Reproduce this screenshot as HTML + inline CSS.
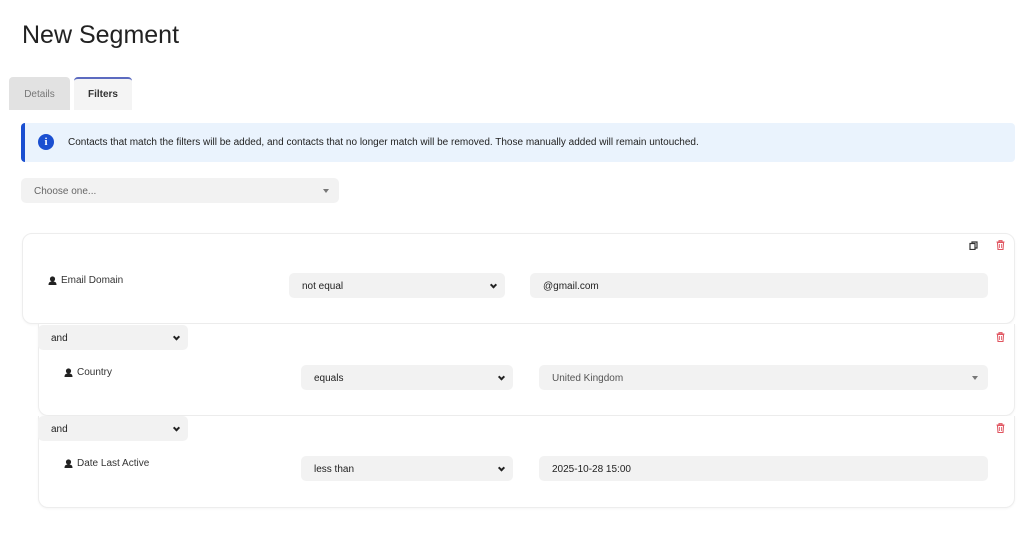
<!DOCTYPE html>
<html><head><style>
*{box-sizing:border-box;margin:0;padding:0}
body{width:1024px;height:536px;background:#fff;font-family:"Liberation Sans",sans-serif;color:#333;position:relative;overflow:hidden;font-size:10px}
.a{position:absolute}
.sel{position:absolute;background:#f2f2f2;border-radius:5px;font-size:10px;color:#222;padding-left:13px;padding-top:1px;display:flex;align-items:center}
.chev{position:absolute;right:9px;top:50%;width:5px;height:5px;border-right:2px solid #222;border-bottom:2px solid #222;transform:translateY(-70%) rotate(45deg)}
.tri{position:absolute;right:10px;top:50%;border-left:3.5px solid transparent;border-right:3.5px solid transparent;border-top:4px solid #777;transform:translateY(-50%)}
.card{position:absolute;border:1px solid #ededed;border-radius:10px;background:#fff;box-shadow:0 1px 2px rgba(0,0,0,0.04)}
.lbl{position:absolute;font-size:10px;color:#333;display:flex;align-items:center;gap:4px}
</style></head><body>
<div class="a" style="left:22px;top:21px;font-size:25px;color:#222">New Segment</div>
<div class="a" style="left:9px;top:77px;width:61px;height:33px;background:#e2e2e2;border-radius:4px 4px 0 0;font-size:10px;color:#777;display:flex;align-items:center;justify-content:center;padding-top:1px">Details</div>
<div class="a" style="left:74px;top:77px;width:58px;height:33px;background:#f4f4f4;border-top:2px solid #5c6bc0;border-radius:4px 4px 0 0;font-size:10px;font-weight:bold;color:#333;display:flex;align-items:center;justify-content:center">Filters</div>
<div class="a" style="left:21px;top:123px;width:994px;height:39px;background:#eaf3fd;border-left:4px solid #1a4fd1;border-radius:4px"></div>
<div class="a" style="left:38px;top:134px;width:16px;height:16px;border-radius:50%;background:#1a4fd1;color:#fff;font-weight:bold;font-size:11px;text-align:center;line-height:16px;font-family:'Liberation Serif',serif">i</div>
<div class="a" style="left:68px;top:137px;font-size:10px;color:#222">Contacts that match the filters will be added, and contacts that no longer match will be removed. Those manually added will remain untouched.</div>
<div class="sel" style="left:21px;top:178px;width:318px;height:25px;color:#666">Choose one...<div class="tri"></div></div>

<div class="card" style="left:22px;top:233px;width:993px;height:91px"></div>
<div class="card" style="left:38px;top:324px;width:977px;height:92px;border-top:none;border-radius:0 0 10px 10px"></div>
<div class="card" style="left:38px;top:416px;width:977px;height:92px;border-top:none;border-radius:0 0 10px 10px"></div>

<svg class="a" style="left:969px;top:241px" width="9" height="9" viewBox="0 0 9 9"><rect x="1" y="2.5" width="5" height="6" fill="none" stroke="#333" stroke-width="1.2"/><path d="M3 2.5V1h5v6H6" fill="none" stroke="#333" stroke-width="1.2"/></svg>
<svg class="a" style="left:996px;top:240px" width="9" height="10" viewBox="0 0 9 10"><path d="M0.5 2h8M3 2V0.7h3V2M1.5 2.5h6l-0.5 7h-5z" fill="none" stroke="#e05560" stroke-width="1.1"/><path d="M3.5 4v4M5.5 4v4" stroke="#e05560" stroke-width="0.8"/></svg>
<svg class="a" style="left:996px;top:332px" width="9" height="10" viewBox="0 0 9 10"><path d="M0.5 2h8M3 2V0.7h3V2M1.5 2.5h6l-0.5 7h-5z" fill="none" stroke="#e05560" stroke-width="1.1"/><path d="M3.5 4v4M5.5 4v4" stroke="#e05560" stroke-width="0.8"/></svg>
<svg class="a" style="left:996px;top:423px" width="9" height="10" viewBox="0 0 9 10"><path d="M0.5 2h8M3 2V0.7h3V2M1.5 2.5h6l-0.5 7h-5z" fill="none" stroke="#e05560" stroke-width="1.1"/><path d="M3.5 4v4M5.5 4v4" stroke="#e05560" stroke-width="0.8"/></svg>

<div class="lbl" style="left:48px;top:275px"><svg width="9" height="9" viewBox="0 0 9 9"><circle cx="4.5" cy="3" r="2.6" fill="#222"/><path d="M0.5 9c0-3 1.5-3.5 4-3.5s4 0.5 4 3.5z" fill="#222"/></svg><span>Email Domain</span></div>
<div class="sel" style="left:289px;top:273px;width:216px;height:25px">not equal<div class="chev"></div></div>
<div class="sel" style="left:530px;top:273px;width:458px;height:25px">@gmail.com</div>

<div class="sel" style="left:38px;top:325px;width:150px;height:25px">and<div class="chev"></div></div>
<div class="lbl" style="left:64px;top:367px"><svg width="9" height="9" viewBox="0 0 9 9"><circle cx="4.5" cy="3" r="2.6" fill="#222"/><path d="M0.5 9c0-3 1.5-3.5 4-3.5s4 0.5 4 3.5z" fill="#222"/></svg><span>Country</span></div>
<div class="sel" style="left:301px;top:365px;width:212px;height:25px">equals<div class="chev"></div></div>
<div class="sel" style="left:539px;top:365px;width:449px;height:25px;color:#555">United Kingdom<div class="tri"></div></div>

<div class="sel" style="left:38px;top:416px;width:150px;height:25px">and<div class="chev"></div></div>
<div class="lbl" style="left:64px;top:458px"><svg width="9" height="9" viewBox="0 0 9 9"><circle cx="4.5" cy="3" r="2.6" fill="#222"/><path d="M0.5 9c0-3 1.5-3.5 4-3.5s4 0.5 4 3.5z" fill="#222"/></svg><span>Date Last Active</span></div>
<div class="sel" style="left:301px;top:456px;width:212px;height:25px">less than<div class="chev"></div></div>
<div class="sel" style="left:539px;top:456px;width:449px;height:25px">2025-10-28 15:00</div>
</body></html>
